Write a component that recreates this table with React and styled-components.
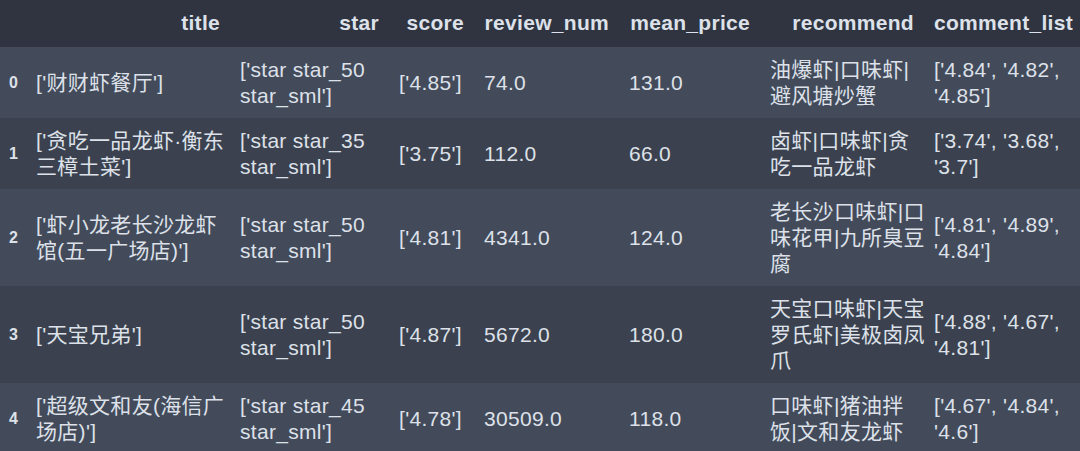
import styled, {createGlobalStyle} from "styled-components";

const GlobalStyle = createGlobalStyle`
  html, body {
    margin: 0;
    padding: 0;
    background: #2f3440;
    overflow: hidden;
  }
`;

const Frame = styled.div`
  width: 1080px;
  height: 451px;
  overflow: hidden;
  background: #434a5a;
`;

const Table = styled.table`
  border-collapse: collapse;
  table-layout: fixed;
  width: 1083px;
  font-family: "Liberation Sans", "Noto Sans CJK SC", sans-serif;
  font-size: 21px;
  line-height: 26px;
  letter-spacing: 0.3px;
  color: #dde1e9;
`;

const HeadRow = styled.tr`
  background: #2f3440;
`;

const HeadCell = styled.th`
  text-align: right;
  font-weight: bold;
  padding: 10px 10px 11px;
  white-space: nowrap;
`;

const Row = styled.tr`
  background: ${({$odd}) => ($odd ? "#3b414e" : "#434a5a")};
`;

const IndexCell = styled.th`
  text-align: left;
  font-size: 16px;
  font-weight: bold;
  padding: 0 0 0 9px;
  vertical-align: middle;
`;

const Cell = styled.td`
  text-align: left;
  padding: 9.5px 10px;
  vertical-align: middle;
  white-space: nowrap;
  overflow: visible;
`;

const widths = [26, 204, 159, 85, 145, 141, 164, 159];
const columns = ["", "title", "star", "score", "review_num", "mean_price", "recommend", "comment_list"];

const rows = [
    [
        ["['财财虾餐厅']"],
        ["['star star_50", "star_sml']"],
        ["['4.85']"], ["74.0"], ["131.0"],
        ["油爆虾|口味虾|", "避风塘炒蟹"],
        ["['4.84', '4.82',", "'4.85']"],
    ],
    [
        ["['贪吃一品龙虾·衡东", "三樟土菜']"],
        ["['star star_35", "star_sml']"],
        ["['3.75']"], ["112.0"], ["66.0"],
        ["卤虾|口味虾|贪", "吃一品龙虾"],
        ["['3.74', '3.68',", "'3.7']"],
    ],
    [
        ["['虾小龙老长沙龙虾", "馆(五一广场店)']"],
        ["['star star_50", "star_sml']"],
        ["['4.81']"], ["4341.0"], ["124.0"],
        ["老长沙口味虾|口", "味花甲|九所臭豆", "腐"],
        ["['4.81', '4.89',", "'4.84']"],
    ],
    [
        ["['天宝兄弟']"],
        ["['star star_50", "star_sml']"],
        ["['4.87']"], ["5672.0"], ["180.0"],
        ["天宝口味虾|天宝", "罗氏虾|美极卤凤", "爪"],
        ["['4.88', '4.67',", "'4.81']"],
    ],
    [
        ["['超级文和友(海信广", "场店)']"],
        ["['star star_45", "star_sml']"],
        ["['4.78']"], ["30509.0"], ["118.0"],
        ["口味虾|猪油拌", "饭|文和友龙虾"],
        ["['4.67', '4.84',", "'4.6']"],
    ],
];

function Lines({lines}) {
    return lines.map((line, i) => (
        <span key={i}>
            {i > 0 && <br/>}
            {line}
        </span>
    ));
}

export default function App() {
    return (
        <Frame>
            <GlobalStyle/>
            <Table>
                <colgroup>
                    {widths.map((w, i) => <col key={i} style={{width: w}}/>)}
                </colgroup>
                <thead>
                <HeadRow>
                    {columns.map((c, i) => <HeadCell key={i}>{c}</HeadCell>)}
                </HeadRow>
                </thead>
                <tbody>
                {rows.map((row, r) => (
                    <Row key={r} $odd={r % 2 === 1}>
                        <IndexCell>{r}</IndexCell>
                        {row.map((cell, c) => (
                            <Cell key={c}><Lines lines={cell}/></Cell>
                        ))}
                    </Row>
                ))}
                </tbody>
            </Table>
        </Frame>
    );
}
